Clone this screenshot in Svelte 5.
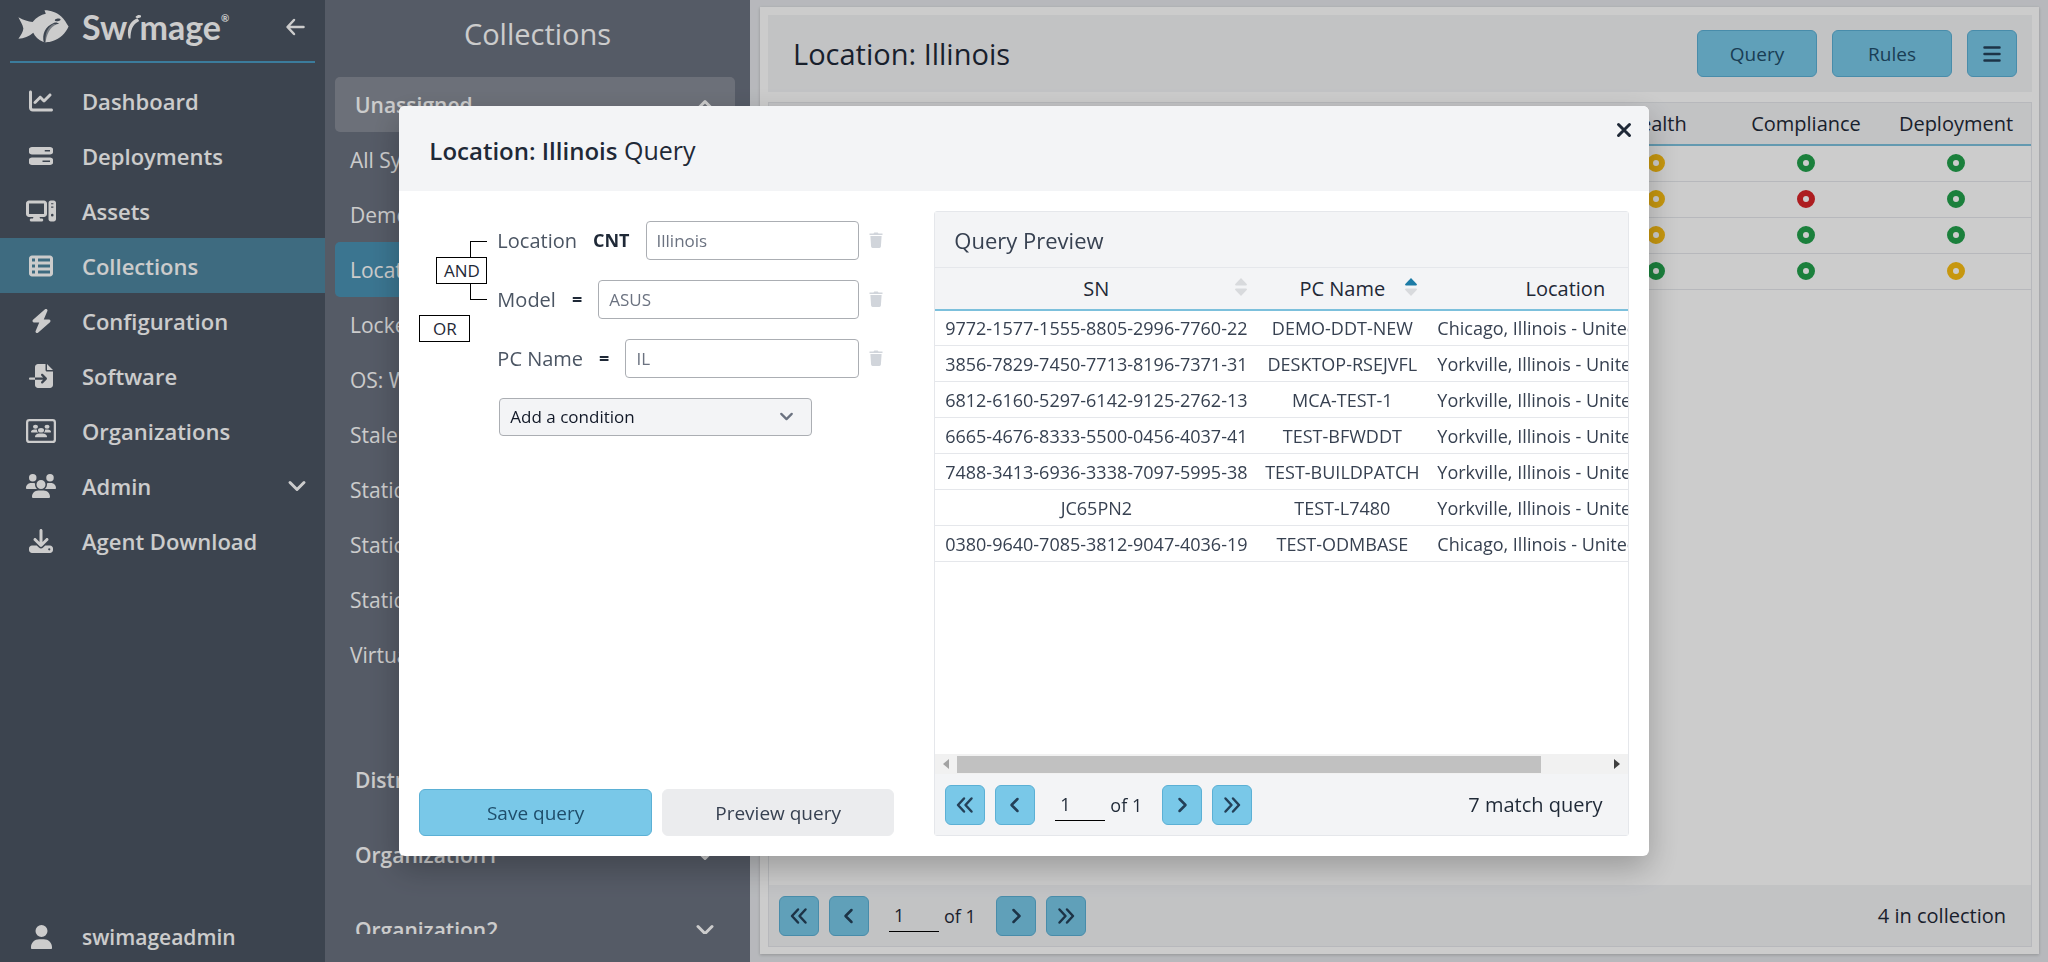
<script>
  const paths = {
    chart: 'M64 64c0-17.7-14.3-32-32-32S0 46.3 0 64V400c0 44.2 35.8 80 80 80H480c17.7 0 32-14.3 32-32s-14.3-32-32-32H80c-8.8 0-16-7.2-16-16V64zm406.6 86.6c12.5-12.5 12.5-32.8 0-45.3s-32.8-12.5-45.3 0L320 210.7l-57.4-57.4c-12.5-12.5-32.8-12.5-45.3 0l-112 112c-12.5 12.5-12.5 32.8 0 45.3s32.8 12.5 45.3 0L240 221.3l57.4 57.4c12.5 12.5 32.8 12.5 45.3 0l128-128z',
    server: 'M64 64C28.7 64 0 84 0 112v64c0 28 28.7 48 64 48H448c35.3 0 64-20 64-48V112c0-28-28.7-48-64-48H64zm272 64h112v32H336zM64 288c-35.3 0-64 20-64 48v64c0 28 28.7 48 64 48H448c35.3 0 64-20 64-48V336c0-28-28.7-48-64-48H64zm224 64h160v32H288z',
    computer: 'M64 32H384c35.3 0 64 28.7 64 64V320c0 35.3-28.7 64-64 64H290l10 34H336c18 0 32 14 32 32s-14 32-32 32H112c-18 0-32-14-32-32s14-32 32-32H148l10-34H64C28.7 384 0 355.300 0 320V96C0 60.700 28.700 32 64 32zM64 96V320H384V96zM528 32h64c26 0 48 22 48 48V432c0 26-22 48-48 48H528c-26 0-48-22-48-48V80c0-26 22-48 48-48zm8 56v24h48V88zm0 72v24h48V160zm24 156a28 28 0 1 0 0 56 28 28 0 1 0 0-56z',
    list: 'M0 96C0 60.7 28.7 32 64 32H448c35.3 0 64 28.7 64 64V416c0 35.3-28.7 64-64 64H64c-35.3 0-64-28.7-64-64V96zm64 0v64h64V96H64zm384 0H192v64H448V96zM64 224v64h64V224H64zm384 0H192v64H448V224zM64 352v64h64V352H64zm384 0H192v64H448V352z',
    bolt: 'M349.4 44.6c5.9-13.7 1.5-29.7-10.6-38.5s-28.6-8-39.9 1.8l-256 224c-10 8.8-13.6 22.9-8.9 35.3S50.7 288 64 288H175.5L98.6 467.4c-5.9 13.7-1.5 29.7 10.6 38.5s28.6 8 39.9-1.8l256-224c10-8.8 13.6-22.9 8.9-35.3s-16.6-20.7-30-20.7H272.5L349.4 44.6z',
    file: 'M128 64c0-35.3 28.7-64 64-64H352V128c0 17.7 14.3 32 32 32H512V448c0 35.3-28.7 64-64 64H192c-35.3 0-64-28.7-64-64V336H302.100l-39 39c-9.400 9.400-9.400 24.600 0 33.900s24.600 9.400 33.900 0l80-80c9.400-9.400 9.400-24.600 0-33.900l-80-80c-9.400-9.400-24.600-9.400-33.900 0s-9.400 24.600 0 33.900l39 39H128V64zm0 224v48H24c-13.300 0-24-10.700-24-24s10.700-24 24-24H128zM512 128H384V0L512 128z',
    users: 'M144 0a80 80 0 1 1 0 160A80 80 0 1 1 144 0zM512 0a80 80 0 1 1 0 160A80 80 0 1 1 512 0zM0 298.7C0 239.8 47.8 192 106.7 192h42.7c15.9 0 31 3.500 44.600 9.700c-1.300 7.200-1.900 14.700-1.900 22.300c0 38.200 16.800 72.500 43.300 96H21.300C9.600 320 0 310.400 0 298.700zM405.300 320h-.7c26.600-23.500 43.300-57.800 43.300-96c0-7.600-.7-15-1.900-22.300c13.600-6.300 28.700-9.700 44.600-9.700h42.700C592.200 192 640 239.800 640 298.700c0 11.800-9.600 21.300-21.300 21.300H405.300zM224 224a96 96 0 1 1 192 0 96 96 0 1 1 -192 0zM128 485.300C128 411.700 187.700 352 261.300 352H378.700C452.300 352 512 411.700 512 485.300c0 14.700-11.900 26.700-26.700 26.700H154.700c-14.700 0-26.700-11.900-26.700-26.700z',
    download: 'M288 32c0-17.7-14.3-32-32-32s-32 14.3-32 32V274.7l-73.4-73.4c-12.5-12.5-32.8-12.5-45.3 0s-12.5 32.8 0 45.3l128 128c12.5 12.5 32.8 12.5 45.3 0l128-128c12.5-12.5 12.5-32.8 0-45.3s-32.8-12.5-45.3 0L288 274.7V32zM64 352c-35.3 0-64 28.7-64 64v32c0 35.3 28.7 64 64 64H448c35.3 0 64-28.7 64-64V416c0-35.3-28.7-64-64-64H346.5l-45.3 45.3c-25 25-65.5 25-90.5 0L165.5 352H64zm368 56a24 24 0 1 1 0 48 24 24 0 1 1 0-48z',
    user: 'M224 256A128 128 0 1 0 224 0a128 128 0 1 0 0 256zm-50 48C78 304 0 376 0 470V496c0 9 7 16 16 16H432c9 0 16-7 16-16V470C448 376 370 304 274 304H174z'
  };
  const widths = { computer: 640, users: 640, org: 640, bolt: 448, user: 448 };

  const nav = [
    ['chart', 'Dashboard'],
    ['server', 'Deployments'],
    ['computer', 'Assets'],
    ['list', 'Collections'],
    ['bolt', 'Configuration'],
    ['file', 'Software'],
    ['org', 'Organizations'],
    ['users', 'Admin'],
    ['download', 'Agent Download']
  ];
  const unassigned = [
    'All Systems', 'Demo', 'Location: Illinois', 'Locked', 'OS: Windows',
    'Stale', 'Static', 'Static', 'Static', 'Virtual'
  ];
  const groups = ['Distributors', 'Organization1', 'Organization2'];
  const status = [
    ['warn', 'ok', 'ok'],
    ['warn', 'bad', 'ok'],
    ['warn', 'ok', 'ok'],
    ['ok', 'ok', 'warn']
  ];
  const labels = { ok: 'Good', warn: 'Warning', bad: 'Failed' };

  let conditions = $state([
    { field: 'Location', op: 'CNT', value: 'Illinois' },
    { field: 'Model', op: '=', value: 'ASUS' },
    { field: 'PC Name', op: '=', value: 'IL' }
  ]);
  const chicago = 'Chicago, Illinois - United States';
  const yorkville = 'Yorkville, Illinois - United States';
  const preview = [
    ['9772-1577-1555-8805-2996-7760-22', 'DEMO-DDT-NEW', chicago],
    ['3856-7829-7450-7713-8196-7371-31', 'DESKTOP-RSEJVFL', yorkville],
    ['6812-6160-5297-6142-9125-2762-13', 'MCA-TEST-1', yorkville],
    ['6665-4676-8333-5500-0456-4037-41', 'TEST-BFWDDT', yorkville],
    ['7488-3413-6936-3338-7097-5995-38', 'TEST-BUILDPATCH', yorkville],
    ['JC65PN2', 'TEST-L7480', yorkville],
    ['0380-9640-7085-3812-9047-4036-19', 'TEST-ODMBASE', chicago]
  ];
</script>

{#snippet icon(name)}
  <svg class="icon" viewBox="0 0 {widths[name] ?? 512} 512" aria-hidden="true">
    {#if name === 'org'}
      <rect x="24" y="24" width="592" height="464" rx="48" fill="none" stroke="currentColor" stroke-width="48" />
      <path d={paths.users} transform="translate(106 124) scale(0.67 0.52)" />
    {:else}
      <path d={paths[name]} fill-rule="evenodd" />
    {/if}
  </svg>
{/snippet}

{#snippet chevron(up = false)}
  <svg class="chevron" viewBox="0 0 20 12" aria-hidden="true">
    <path d={up ? 'M3 9.500l7-7 7 7' : 'M3 2.500l7 7 7-7'} />
  </svg>
{/snippet}

{#snippet pager(name, total)}
  <div class="pager">
    <button class="blue square" aria-label="First page">
      <svg viewBox="0 0 20 20"><path d="M9 3.500L3 10l6 6.500M16.500 3.500l-6 6.500 6 6.500" /></svg>
    </button>
    <button class="blue square" aria-label="Previous page">
      <svg viewBox="0 0 20 20"><path d="M12.500 4l-6 6 6 6" /></svg>
    </button>
    <span class="page">
      <input aria-label="{name} page" value="1" />
      <span>of 1</span>
    </span>
    <button class="blue square" aria-label="Next page">
      <svg viewBox="0 0 20 20"><path d="M7.500 4l6 6-6 6" /></svg>
    </button>
    <button class="blue square" aria-label="Last page">
      <svg viewBox="0 0 20 20"><path d="M3.500 3.500l6 6.500-6 6.500M11 3.500l6 6.500-6 6.500" /></svg>
    </button>
    <span class="total">{total}</span>
  </div>
{/snippet}

<div class="app">
  <aside class="sidebar">
    <header class="brand">
      <svg class="fish" viewBox="0 0 152 100" aria-hidden="true">
        <path fill="currentColor" d="M0 22C16 31 30 35 43 36C55 22 68 13 83 11L79 1C99 1 117 9 129 19C140 28 145 40 152 50C143 70 126 88 104 94C94 98 84 98 76 97C60 91 50 80 45 69C32 80 17 86 0 87C8 76 14 66 15 56C13 44 5 34 0 22z" />
        <path class="cut" d="M77 99C71 74 80 51 108 39C114 36 119 38 123 42C103 45 88 62 82 98z" />
        <path fill="currentColor" d="M84 98C86 74 98 56 121 46L107 42C87 52 80 74 82 98z" opacity=".4" />
        <ellipse class="cut" cx="119" cy="30" rx="9" ry="4" transform="rotate(-8 119 30)" />
      </svg>
      <span class="wordmark">
        <span>Sw</span><svg viewBox="0 0 16 28" aria-hidden="true"><path fill="currentColor" d="M2 27C-1 17 3 7 12 4L14 7C6 11 4 18 4 27zM10 2C12-1 18 0 16 2.500C14 4.500 9 4 10 2z" /></svg><span>mage</span><sup>®</sup>
      </span>
      <button class="bare back" aria-label="Collapse menu">
        <svg viewBox="0 0 20 18"><path d="M9 2L2.500 9 9 16M3 9h15.500" /></svg>
      </button>
    </header>
    <nav>
      {#each nav as [glyph, label]}
        <a href="#{glyph}" class:active={label === 'Collections'}>
          <span class="slot">{@render icon(glyph)}</span>
          <span class="label">{label}</span>
          {#if label === 'Admin'}{@render chevron()}{/if}
        </a>
      {/each}
    </nav>
    <a class="account" href="#account">
      <span class="slot">{@render icon('user')}</span>
      <span class="label">swimageadmin</span>
    </a>
  </aside>

  <section class="panel">
    <h1>Collections</h1>
    <div class="scroller">
      <button class="group open">Unassigned {@render chevron(true)}</button>
      <ul>
        {#each unassigned as item, i}
          <li><a href="#c{i}" class:selected={i === 2}>{item}</a></li>
        {/each}
      </ul>
      {#each groups as group}
        <button class="group">{group} {@render chevron()}</button>
      {/each}
    </div>
  </section>

  <main>
    <div class="card">
      <header class="card-head">
        <h2>Location: Illinois</h2>
        <button class="blue wide">Query</button>
        <button class="blue wide">Rules</button>
        <button class="blue menu" aria-label="Menu">
          <svg viewBox="0 0 18 18"><path d="M1.500 2.500h15M1.500 9h15M1.500 15.500h15" /></svg>
        </button>
      </header>
      <div class="box">
        <div class="grow">
          <table class="status">
            <thead>
              <tr><th></th><th>Health</th><th>Compliance</th><th>Deployment</th></tr>
            </thead>
            <tbody>
              {#each status as row}
                <tr>
                  <td></td>
                  {#each row as s}<td><i class="ring {s}" role="img" aria-label={labels[s]}></i></td>{/each}
                </tr>
              {/each}
            </tbody>
          </table>
        </div>
        {@render pager('Collection', '4 in collection')}
      </div>
    </div>
  </main>
</div>

<div class="backdrop">
  <div class="modal" role="dialog" aria-modal="true" aria-labelledby="query-title">
    <header class="modal-head">
      <h2 id="query-title"><b>Location: Illinois</b> Query</h2>
      <button class="bare close" aria-label="Close">
        <svg viewBox="0 0 16 16"><path d="M2.500 2.500l11 11M13.500 2.500l-11 11" /></svg>
      </button>
    </header>
    <div class="modal-body">
      <div class="builder">
        <div class="logic">
          <div class="tree">
            <div class="pair"><i class="bracket"></i><span class="op-box">AND</span></div>
            <span class="op-box">OR</span>
          </div>
          <div class="conditions">
            {#each conditions as c, i}
              <div class="condition">
                <label for="cond{i}">{c.field}</label>
                <strong>{c.op}</strong>
                <input id="cond{i}" bind:value={c.value} />
                <button class="bare trash" aria-label="Remove {c.field}">
                  <svg viewBox="0 0 14 16"><path d="M0.500 1.500h4l.8-1.100h3.400l.8 1.100h4v1.600H.5zM1.400 4h11.200l-.7 10.500a1.500 1.500 0 0 1-1.500 1.400H3.600a1.500 1.500 0 0 1-1.500-1.400z" /></svg>
                </button>
              </div>
            {/each}
            <div class="select">
              <select aria-label="Add a condition"><option>Add a condition</option></select>
              {@render chevron()}
            </div>
          </div>
        </div>
        <div class="actions">
          <button class="blue">Save query</button>
          <button class="plain">Preview query</button>
        </div>
      </div>

      <section class="preview">
        <h3>Query Preview</h3>
        <div class="clip">
          <table>
            <colgroup><col class="c-sn" /><col class="c-pc" /><col class="c-loc" /></colgroup>
            <thead>
              <tr>
                {#each ['SN', 'PC Name', 'Location'] as head}
                  <th>
                    {head}
                    <svg class="sort" viewBox="0 0 12 18" aria-hidden="true">
                      <path class:on={head === 'PC Name'} d="M6 0l5.700 6q.8 1.500-.8 1.500H1.100q-1.600 0-.8-1.500z" />
                      <path d="M6 18l5.700-6q.8-1.500-.8-1.500H1.100q-1.600 0-.8 1.500z" />
                    </svg>
                  </th>
                {/each}
              </tr>
            </thead>
            <tbody>
              {#each preview as row}
                <tr>{#each row as cell}<td>{cell}</td>{/each}</tr>
              {/each}
            </tbody>
          </table>
        </div>
        <div class="hbar" aria-hidden="true">
          <svg class="dim" viewBox="0 0 6 10"><path d="M6 0v10L0 5z" /></svg>
          <div class="track"><div class="thumb"></div></div>
          <svg viewBox="0 0 6 10"><path d="M0 0v10l6-5z" /></svg>
        </div>
        {@render pager('Preview', '7 match query')}
      </section>
    </div>
  </div>
</div>

<style>
  :global(body) {
    font-family: 'Open Sans', 'Noto Sans', sans-serif;
    font-size: 20px;
    color: #1f2937;
  }
  :global(*) { box-sizing: border-box; }
  h1, h2, h3, ul { margin: 0; padding: 0; font-weight: 400; list-style: none; }
  a { color: inherit; text-decoration: none; }
  button, input, select { font: inherit; color: inherit; margin: 0; }
  button { border: 0; padding: 0; background: none; cursor: pointer; }
  svg { display: block; flex: none; }
  table { border-collapse: collapse; table-layout: fixed; width: 100%; }

  .app { display: flex; height: 100vh; overflow: hidden; background: #e5e7eb; }

  .sidebar {
    width: 325px;
    flex: none;
    display: flex;
    flex-direction: column;
    background: #4b5563;
    color: #fff;
    font-size: 22px;
    font-weight: 600;
  }
  .brand {
    display: flex;
    align-items: center;
    height: 63px;
    margin: 0 10px 10px;
    padding: 0 10px 8px 8px;
    border-bottom: 2px solid #4a9cc3;
  }
  .fish { width: 51px; height: 33px; }
  .cut { fill: #4b5563; }
  .wordmark {
    display: flex;
    align-items: baseline;
    margin: 0 auto 0 13px;
    font: 700 34px/44px Lato, sans-serif;
  }
  .wordmark svg { width: 14px; height: 26px; margin-right: -2px; }
  .wordmark sup { font-size: 10px; line-height: 10px; align-self: flex-start; margin-top: 8px; }
  .back svg { width: 20px; height: 18px; }
  .bare svg path { fill: none; stroke: currentColor; stroke-width: 2.5; stroke-linecap: round; stroke-linejoin: round; }
  .back { color: #fff; }
  nav { flex: 1; }
  nav a, .account { display: flex; align-items: center; height: 55px; padding-right: 18px; }
  .account { height: 50px; font-size: 21px; }
  .active { background: #4e86a0; }
  .slot { width: 82px; display: flex; justify-content: center; }
  .icon { height: 24px; fill: currentColor; }
  .label { flex: 1; }
  .chevron { width: 20px; height: 12px; fill: none; stroke: currentColor; stroke-width: 3; stroke-linecap: round; stroke-linejoin: round; }

  .panel {
    width: 425px;
    flex: none;
    display: flex;
    flex-direction: column;
    padding-bottom: 28px;
    background: #6b7280;
    color: #fff;
    font-size: 21px;
  }
  h1 { height: 77px; line-height: 67px; font-size: 29px; text-align: center; }
  .scroller { flex: 1; overflow: hidden; padding: 0 15px 0 10px; }
  .group {
    display: flex;
    width: 100%;
    height: 55px;
    margin-bottom: 20px;
    padding: 0 20px;
    align-items: center;
    justify-content: space-between;
    border-radius: 5px;
    font-weight: 600;
  }
  .group.open { margin: 0; background: #888d98; }
  ul { padding-bottom: 70px; }
  li a { display: block; height: 55px; line-height: 57px; padding-left: 15px; border-radius: 5px; }
  .selected { background: #4a93b5; }

  main { flex: 1; min-width: 0; padding: 7px 9px 8px 10px; }
  .card {
    height: 100%;
    display: flex;
    flex-direction: column;
    gap: 10px;
    padding: 8px 7px 7px 8px;
    background: #fff;
    box-shadow: 0 1px 3px rgba(0, 0, 0, 0.2);
  }
  .card-head { display: flex; align-items: center; gap: 15px; height: 77px; padding: 0 15px 0 25px; background: #f3f4f6; }
  h2 { flex: 1; font-size: 29px; }
  .blue { background: #79c8e8; border: 1px solid #5bb0d5; border-radius: 6px; color: #1f4e6b; font-size: 19px; }
  .blue svg { fill: none; stroke: currentColor; stroke-width: 2.5; stroke-linecap: round; stroke-linejoin: round; margin: auto; }
  .wide { width: 120px; height: 47px; }
  .menu { width: 50px; height: 47px; }
  .menu svg { width: 18px; height: 18px; }
  .menu, .square { color: #244058; }
  .box { flex: 1; display: flex; flex-direction: column; min-height: 0; border: 1px solid #e5e7eb; }
  .grow { flex: 1; }
  th { font-weight: 400; height: 42px; padding: 0; background: #f3f4f6; border-bottom: 2px solid #7cc0dc; }
  td { height: 36px; padding: 0; text-align: center; border-bottom: 1px solid #e5e7eb; }
  .status th, .status td { width: 150px; }
  .status th:first-child, .status td:first-child { width: auto; }
  .ring { display: block; width: 18px; height: 18px; margin: auto; border: 6px solid; border-radius: 50%; }
  .ok { border-color: #22a04c; }
  .warn { border-color: #f9bd13; }
  .bad { border-color: #d92528; }

  .pager { display: flex; align-items: center; gap: 10px; flex: none; height: 61px; padding: 0 25px 0 10px; background: #f3f4f6; }
  .square { width: 40px; height: 40px; }
  .square svg { width: 20px; height: 20px; }
  .page { display: flex; align-items: center; gap: 5px; height: 40px; margin: 0 10px; font-size: 18px; }
  .page input { width: 50px; height: 32px; padding: 0 5px; border: 0; border-bottom: 1px solid #000; background: none; outline: 0; }
  .total { margin-left: auto; }

  .backdrop {
    position: fixed;
    inset: 0;
    display: flex;
    align-items: center;
    justify-content: center;
    background: rgba(0, 0, 0, 0.2);
  }
  .modal {
    width: 61vw;
    height: 78vh;
    display: flex;
    flex-direction: column;
    overflow: hidden;
    border-radius: 6px;
    background: #fff;
    box-shadow: 0 12px 32px rgba(0, 0, 0, 0.25);
  }
  .modal-head { display: flex; height: 85px; flex: none; padding: 0 17px 0 30px; background: #f3f4f6; }
  .modal-head h2 { font-size: 25px; line-height: 88px; }
  .modal-head b { font-size: 24px; font-weight: 600; }
  .close { height: 48px; color: #1f2937; }
  .close svg { width: 16px; height: 16px; }
  .close svg path { stroke-width: 3; }
  .modal-body { flex: 1; min-height: 0; display: flex; gap: 40px; padding: 20px; }
  .builder { width: 475px; flex: none; display: flex; flex-direction: column; justify-content: space-between; }
  .logic { display: flex; gap: 10px; padding-top: 10px; }
  .tree { width: 68px; flex: none; display: flex; flex-direction: column; align-items: flex-start; gap: 15px; padding-top: 20px; }
  .pair { display: grid; width: 100%; height: 59px; align-items: center; justify-items: end; }
  .pair > * { grid-area: 1 / 1; }
  .bracket { width: 17px; height: 100%; border: 1px solid #000; border-right: 0; }
  .op-box {
    position: relative;
    width: 51px;
    height: 27px;
    border: 1px solid #000;
    background: #fff;
    font-size: 17px;
    line-height: 26px;
    text-align: center;
  }
  .conditions { flex: 1; min-width: 0; display: flex; flex-direction: column; gap: 20px; padding-right: 11px; }
  .condition { display: flex; align-items: center; height: 39px; color: #4b5563; }
  .condition label { white-space: nowrap; }
  .condition strong { margin: 0 16px; font-size: 18px; font-weight: 700; color: #1f2937; }
  .condition input { flex: 1; min-width: 0; height: 39px; padding: 0 10px; border: 1px solid #abaeb3; border-radius: 4px; background: #fff; font-size: 17px; color: #6b7280; }
  .trash { margin-left: 10px; }
  .trash svg { width: 14px; height: 16px; }
  .trash svg path { fill: #d1d5db; stroke: none; }
  .select { display: grid; width: 313px; margin-left: 2px; align-items: center; }
  .select > * { grid-area: 1 / 1; }
  .select select { appearance: none; width: 100%; height: 38px; padding: 0 10px; border: 1px solid #abaeb3; border-radius: 4px; background: #f3f4f6; font-size: 17px; color: #111827; }
  .select :global(.chevron) { justify-self: end; width: 15px; height: 9px; margin-right: 18px; color: #6b7280; pointer-events: none; }
  .actions { display: flex; gap: 10px; }
  .actions button { flex: 1 1 0; height: 47px; font-size: 19px; }
  .plain { background: #ebecee; border: 1px solid #ebecee; border-radius: 6px; color: #374151; }

  .preview { flex: 1; min-width: 0; display: flex; flex-direction: column; border: 1px solid #e5e7eb; border-radius: 3px; }
  h3 { flex: none; height: 56px; padding-left: 19px; line-height: 56px; font-size: 22px; background: #f3f4f6; border-bottom: 1px solid #e5e7eb; color: #374151; }
  .clip { flex: 1; min-height: 0; overflow: hidden; }
  .clip table { width: 768px; }
  .clip td { font-size: 18px; white-space: nowrap; color: #374151; }
  .clip th { position: relative; }
  .c-sn { width: 322px; }
  .c-pc { width: 170px; }
  .c-loc { width: 276px; }
  .clip td:last-child { text-align: left; padding-left: 10px; }
  .sort { position: absolute; right: 10px; top: 10px; width: 12px; height: 18px; fill: #d8dadd; }
  .sort .on { fill: #1c7ba6; }
  .hbar { display: flex; align-items: center; gap: 8px; flex: none; height: 20px; padding: 0 8px; background: #f1f1f1; }
  .hbar svg { width: 6px; height: 10px; fill: #404040; }
  .hbar .dim { fill: #a3a3a3; }
  .track { flex: 1; }
  .thumb { width: 90%; height: 17px; background: #c1c1c1; }
</style>
